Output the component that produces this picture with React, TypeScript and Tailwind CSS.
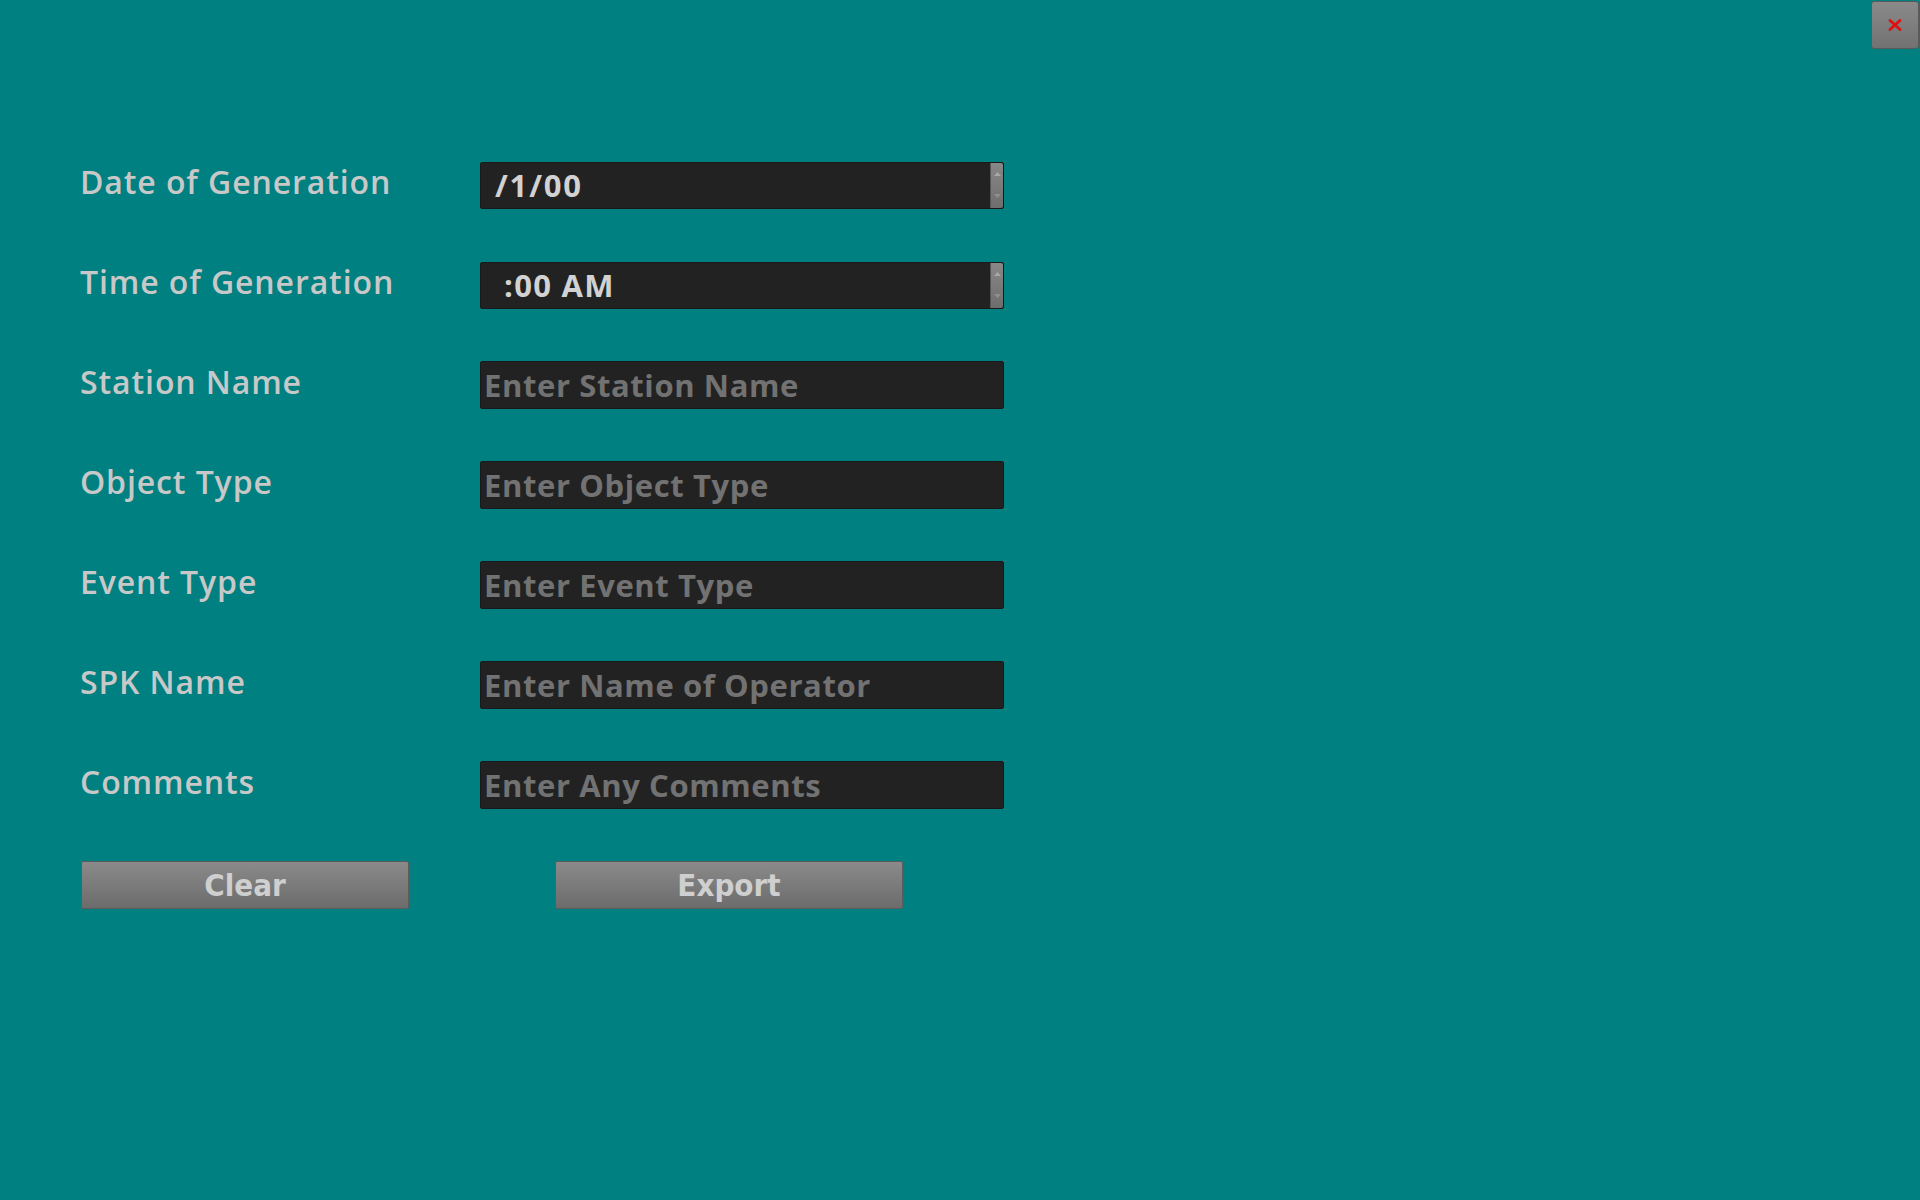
import { useState } from "react";

const fields = [
  { label: "Station Name", placeholder: "Enter Station Name" },
  { label: "Object Type", placeholder: "Enter Object Type" },
  { label: "Event Type", placeholder: "Enter Event Type" },
  { label: "SPK Name", placeholder: "Enter Name of Operator" },
  { label: "Comments", placeholder: "Enter Any Comments" },
];

const Spinner = () => (
  <div className="w-[13px] h-full flex flex-col items-center justify-around bg-gradient-to-b from-[#888888] to-[#6e6e6e] border-l border-[#555] rounded-r-[2px]">
    <svg width="7" height="4" viewBox="0 0 7 4">
      <path d="M0 4 L3.5 0 L7 4 Z" fill="#a8a8a8" />
    </svg>
    <svg width="7" height="4" viewBox="0 0 7 4">
      <path d="M0 0 L3.5 4 L7 0 Z" fill="#8f8f8f" />
    </svg>
  </div>
);

export default function App() {
  const [values, setValues] = useState<Record<string, string>>({});

  return (
    <div
      className="relative min-h-[1200px] w-full bg-[#008080] pt-[161px] pl-[80px]"
      style={{ fontFamily: "'Open Sans', 'Noto Sans', sans-serif" }}
    >
      {/* close */}
      <button className="absolute top-[1px] right-[1px] w-[48px] h-[48px] rounded-[3px] border border-[#5a5a5a] bg-gradient-to-b from-[#8a8a8a] to-[#727272] flex items-center justify-center">
        <svg width="14" height="12" viewBox="0 0 14 12">
          <path d="M2 1.5 L12 10.5 M12 1.5 L2 10.5" stroke="#e01010" strokeWidth="2.8" strokeLinecap="round" />
        </svg>
      </button>

      <div className="flex flex-col gap-[52px]">
        {/* Date */}
        <div className="flex items-center h-[48px]">
          <div className="w-[400px] text-[32px] tracking-[0.9px] font-semibold text-[#c8c8c8] -mt-[6px]">Date of Generation</div>
          <div className="w-[524px] h-[47px] flex bg-[#222222] border border-[#1a1a1a] rounded-[2px]">
            <div className="flex-1 flex items-center pl-[14px] text-[31px] tracking-[1.8px] font-bold text-[#d2d2d2]">/1/00</div>
            <Spinner />
          </div>
        </div>

        {/* Time */}
        <div className="flex items-center h-[48px]">
          <div className="w-[400px] text-[32px] tracking-[0.9px] font-semibold text-[#c8c8c8] -mt-[6px]">Time of Generation</div>
          <div className="w-[524px] h-[47px] flex bg-[#222222] border border-[#1a1a1a] rounded-[2px]">
            <div className="flex-1 flex items-center pl-[23px] text-[31px] tracking-[1.3px] font-bold text-[#d2d2d2]">:00 AM</div>
            <Spinner />
          </div>
        </div>

        {fields.map((f) => (
          <div key={f.label} className="flex items-center h-[48px]">
            <div className="w-[400px] text-[32px] tracking-[0.9px] font-semibold text-[#c8c8c8] -mt-[6px]">{f.label}</div>
            <input
              value={values[f.label] ?? ""}
              onChange={(e) => setValues({ ...values, [f.label]: e.target.value })}
              placeholder={f.placeholder}
              className="w-[524px] h-[48px] bg-[#222222] border border-[#1a1a1a] rounded-[2px] pl-[3px] text-[31px] tracking-[0.6px] font-bold text-[#d2d2d2] placeholder:text-[#727272] outline-none"
            />
          </div>
        ))}

        {/* Buttons */}
        <div className="flex items-center h-[48px]">
          <button
            className="w-[328px] h-[48px] ml-[1px] rounded-[2px] border border-[#5c5c5c] bg-gradient-to-b from-[#8a8a8a] to-[#6c6c6c] text-[31px] font-semibold text-[#cfcfcf]"
            style={{ fontFamily: "'DejaVu Sans Condensed', 'DejaVu Sans', sans-serif", fontStretch: "condensed" }}
          >
            Clear
          </button>
          <button
            className="w-[348px] h-[48px] ml-[146px] rounded-[2px] border border-[#5c5c5c] bg-gradient-to-b from-[#8a8a8a] to-[#6c6c6c] text-[31px] font-semibold text-[#cfcfcf]"
            style={{ fontFamily: "'DejaVu Sans Condensed', 'DejaVu Sans', sans-serif", fontStretch: "condensed" }}
          >
            Export
          </button>
        </div>
      </div>
    </div>
  );
}
